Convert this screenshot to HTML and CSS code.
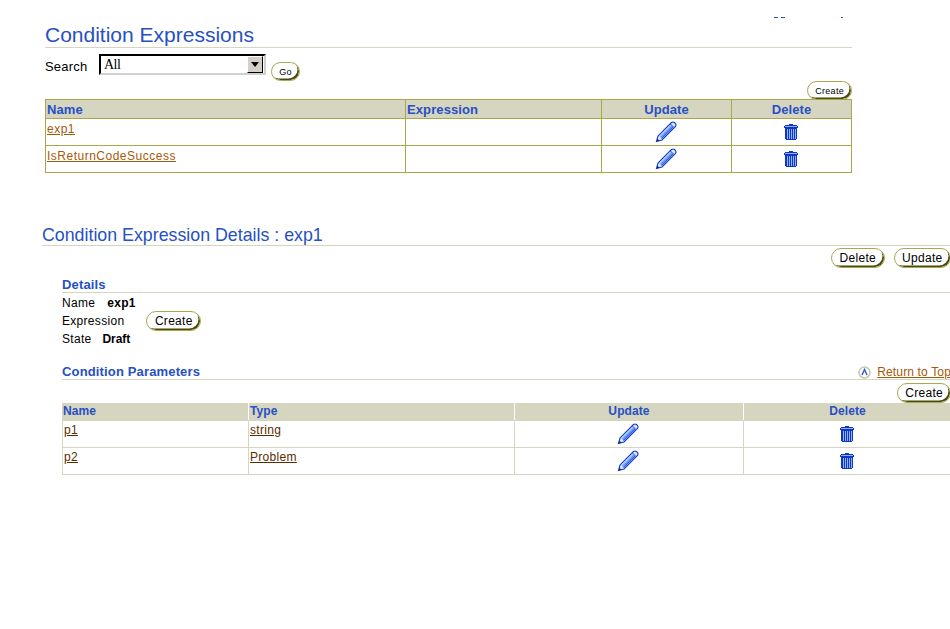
FILE: index.html
```html
<!DOCTYPE html>
<html lang="en">
<head>
  <meta charset="UTF-8" />
  <title>Condition Expressions</title>
  <link rel="stylesheet" href="styles.css">
</head>
<body>
  <svg class="sprites" width="0" height="0">
    <symbol id="pencil" viewBox="0 0 22 22">
      <path d="M1.500 20.500L3 15 16.500 1.500q1.500-1 3 0l1 1q1 1.500 0 3L7 19z" fill="#dbe8ff" stroke="#1438c8" stroke-width="1.100"/>
      <path d="M4 15L15.500 3.500l1 1L5 16z" fill="#a9c8fa"/>
      <path d="M5 16L16.500 4.500l1 1L6 17z" fill="#5f96f2"/>
      <path d="M6 17L17.500 5.500l1 1L6.800 18z" fill="#2f66dc"/>
      <path d="M15.500 3L19 6.500" stroke="#1438c8" stroke-width="0.900"/>
      <path d="M1.500 20.500l.8-3 2.200 2.200z" fill="#0c2a9c"/>
    </symbol>
    <symbol id="trash" viewBox="0 0 14 16">
      <path d="M5 0h4v1h4v1h1v2h-1v11h-1v1H2v-1H1V4H0V2h1V1h4z" fill="#0f35c4"/>
      <path d="M1 2h12v1H1z" fill="#8fb4f6"/>
      <path d="M3 5h1v10H3zM5 5h1v10H5zM7 5h1v10H7zM9 5h1v10H9zM11 5h1v10h-1z" fill="#8fb4f6"/>
    </symbol>
  </svg>

  <div class="top-strip">
    <span class="dash"></span>
    <span class="dash"></span>
    <span class="dash dash-last"></span>
  </div>

  <div class="section-one">
    <h1 class="page-title">Condition Expressions</h1>
    <div class="search-row">
      <span class="search-label">Search</span>
      <div class="select-box">
        <span class="select-value">All</span>
        <span class="select-arrow"></span>
      </div>
      <button class="btn btn-small btn-go">Go</button>
    </div>
    <div class="table-actions">
      <button class="btn btn-small">Create</button>
    </div>
    <table class="grid grid-olive">
      <colgroup>
        <col class="col-a"><col class="col-b"><col class="col-c"><col class="col-d">
      </colgroup>
      <tr>
        <th class="left">Name</th>
        <th class="left">Expression</th>
        <th>Update</th>
        <th>Delete</th>
      </tr>
      <tr>
        <td><a href="#">exp1</a></td>
        <td></td>
        <td class="icon-cell"><svg class="icon-pencil"><use href="#pencil"/></svg></td>
        <td class="icon-cell"><svg class="icon-trash"><use href="#trash"/></svg></td>
      </tr>
      <tr>
        <td><a href="#">IsReturnCodeSuccess</a></td>
        <td></td>
        <td class="icon-cell"><svg class="icon-pencil"><use href="#pencil"/></svg></td>
        <td class="icon-cell"><svg class="icon-trash"><use href="#trash"/></svg></td>
      </tr>
    </table>
  </div>

  <div class="section-two">
    <h2 class="detail-title">Condition Expression Details : exp1</h2>
    <div class="detail-actions">
      <button class="btn">Delete</button>
      <button class="btn">Update</button>
    </div>

    <div class="inner">
      <h3 class="sub-title">Details</h3>
      <div class="field field-first"><span>Name</span><b class="gap-name">exp1</b></div>
      <div class="field field-expr"><span>Expression</span><button class="btn btn-expr">Create</button></div>
      <div class="field"><span>State</span><b class="gap-state">Draft</b></div>

      <div class="sub-head">
        <h3 class="sub-title-plain">Condition Parameters</h3>
        <div class="return-top">
          <svg class="icon-top" viewBox="0 0 13 13">
            <circle cx="6.500" cy="6.500" r="5.500" fill="#fff" stroke="#c9c7ae" stroke-width="1.500"/>
            <path d="M4 9L6.500 3.500 9 9" fill="none" stroke="#2a5fd8" stroke-width="1.500"/>
          </svg>
          <a href="#">Return to Top</a>
        </div>
      </div>
      <div class="table-actions table-actions-two">
        <button class="btn btn-create-two">Create</button>
      </div>
      <table class="grid grid-pale">
        <colgroup>
          <col class="col-e"><col class="col-f"><col class="col-g"><col class="col-h">
        </colgroup>
        <tr>
          <th class="left">Name</th>
          <th class="left">Type</th>
          <th>Update</th>
          <th>Delete</th>
        </tr>
        <tr>
          <td><a href="#">p1</a></td>
          <td><a href="#">string</a></td>
          <td class="icon-cell"><svg class="icon-pencil"><use href="#pencil"/></svg></td>
          <td class="icon-cell"><svg class="icon-trash"><use href="#trash"/></svg></td>
        </tr>
        <tr>
          <td><a href="#">p2</a></td>
          <td><a href="#">Problem</a></td>
          <td class="icon-cell"><svg class="icon-pencil"><use href="#pencil"/></svg></td>
          <td class="icon-cell"><svg class="icon-trash"><use href="#trash"/></svg></td>
        </tr>
      </table>
    </div>
  </div>
</body>
</html>
```

FILE: styles.css
```css
* {
  box-sizing: border-box;
  margin: 0;
  padding: 0;
}

html,
body {
  overflow: hidden;
  height: 100%;
}

body {
  background-color: #fff;
  color: #000;
  font-family: "Liberation Sans", Arial, sans-serif;
  font-size: 12px;
  width: 950px;
}

.sprites {
  display: block;
  height: 0;
}

.top-strip {
  display: flex;
  height: 18px;
  padding: 17px 0 0 774px;
}

.dash {
  width: 4px;
  height: 1px;
  margin-right: 3px;
  background-color: #2a50c0;
}

.dash-last {
  width: 2px;
  margin-left: 53px;
}

.section-one {
  width: 807px;
  margin-left: 45px;
}

.page-title {
  font-size: 21px;
  font-weight: normal;
  color: #2650c4;
  height: 30px;
  line-height: 34px;
  border-bottom: 1px solid #d6d5c0;
}

.search-row {
  display: flex;
  align-items: flex-start;
  height: 33px;
  padding-top: 6px;
}

.search-label {
  width: 54px;
  font-size: 13px;
  line-height: 14px;
  letter-spacing: 0.2px;
  padding-top: 6px;
}

.select-box {
  display: flex;
  justify-content: space-between;
  width: 167px;
  height: 21px;
  padding: 0 1px 0 3px;
  border: 2px solid #000;
  border-right-color: #d0d0d0;
  border-bottom-color: #d0d0d0;
  font-family: "Liberation Serif", serif;
  font-size: 14px;
  line-height: 17px;
  letter-spacing: -0.5px;
}

.select-arrow {
  position: relative;
  width: 16px;
  height: 17px;
  background-color: #d4d0c8;
  border: 1px solid #000;
  border-top-color: #fff;
  border-left-color: #fff;
}

.select-arrow::after {
  content: "";
  position: absolute;
  left: 3px;
  top: 5px;
  border: 4px solid transparent;
  border-top: 5px solid #000;
  border-bottom: 0;
}

.btn {
  height: 20px;
  padding: 0 7.5px;
  font-family: "Liberation Sans", Arial, sans-serif;
  font-size: 12px;
  letter-spacing: 0.3px;
  background-color: #fff;
  color: #000;
  border: 1px solid #a8a850;
  border-radius: 10px;
  box-shadow: inset -2px -2px 0 -0.5px #4a4a10;
}

.btn-small {
  font-size: 9px;
  padding: 0 7px;
  height: 19px;
}

.btn-go {
  margin: 8px 0 0 5px;
  width: 29px;
  padding: 0;
}

.btn-create-two {
  padding: 0 7px;
}

.table-actions {
  display: flex;
  justify-content: flex-end;
}

.grid {
  width: 100%;
  border-collapse: collapse;
  table-layout: fixed;
  font-size: 12px;
  letter-spacing: 0.3px;
}

.grid th {
  height: 19px;
  color: #2650c4;
  background-color: #d6d5c0;
  font-size: 13px;
  font-weight: bold;
  padding: 0 1px;
}

.grid td {
  height: 27px;
  padding: 2px 1px 0;
  vertical-align: top;
}

.grid .left {
  text-align: left;
}

.grid-olive {
  width: 806px;
  margin-top: -1px;
  position: relative;
}

.grid-olive th {
  letter-spacing: 0.1px;
}

.grid-olive td {
  padding-top: 3px;
}

.grid-olive th,
.grid-olive td {
  border: 1px solid #a8a84a;
}

.grid-olive a {
  color: #a65a08;
  letter-spacing: 0.5px;
}

.grid-pale a {
  color: #5a2c00;
}

.grid-pale th,
.grid-pale td {
  border: 1px solid #d6d5c0;
}

.grid-pale th {
  height: 17px;
  border-top: 0;
  font-size: 12px;
  letter-spacing: 0.1px;
  border-right-color: #fff;
}

.grid-pale th:first-child {
  text-indent: -1px;
}

.grid-pale th:last-child {
  border-right-color: #d6d5c0;
}

.icon-cell {
  text-align: center;
}

.grid .icon-cell {
  padding: 0 2px 0 0;
  vertical-align: middle;
}

.icon-pencil {
  width: 22px;
  height: 22px;
  display: inline-block;
  vertical-align: middle;
}

.icon-trash {
  width: 14px;
  height: 16px;
  display: inline-block;
  vertical-align: middle;
  shape-rendering: crispEdges;
}

.col-a { width: 360px; }
.col-b { width: 196px; }
.col-c { width: 130px; }
.col-d { width: 120px; }

.col-e { width: 186px; }
.col-f { width: 266px; }
.col-g { width: 229px; }
.col-h { width: 208px; }

.section-two {
  margin: 51px 0 0 42px;
  width: 909px;
}

.detail-title {
  font-size: 17.8px;
  font-weight: normal;
  color: #2650c4;
  height: 22px;
  line-height: 22px;
  border-bottom: 1px solid #d6d5c0;
}

.detail-actions {
  display: flex;
  justify-content: flex-end;
  gap: 9px;
  height: 31px;
  padding-top: 2px;
}

.inner {
  margin-left: 20px;
}

.sub-title {
  font-size: 13px;
  color: #2650c4;
  height: 16px;
  line-height: 15px;
  letter-spacing: 0.15px;
  border-bottom: 1px solid #d6d5c0;
}

.field {
  display: flex;
  align-items: center;
  height: 18px;
  letter-spacing: 0.3px;
}

.field-first {
  margin-top: 1px;
}

.gap-name {
  margin-left: 12px;
}

.gap-state {
  margin-left: 11px;
  letter-spacing: -0.1px;
}

.btn-expr {
  margin-left: 22px;
}

.sub-head {
  display: flex;
  justify-content: space-between;
  align-items: flex-end;
  height: 32px;
  border-bottom: 1px solid #d6d5c0;
}

.sub-title-plain {
  font-size: 13px;
  color: #2650c4;
  letter-spacing: 0.15px;
  line-height: 15px;
}

.return-top {
  display: flex;
  align-items: center;
  gap: 6px;
  letter-spacing: 0.15px;
}

.return-top a {
  color: #a65a08;
}

.icon-top {
  width: 13px;
  height: 13px;
}

.table-actions-two {
  height: 23px;
  padding-top: 3px;
}
```
